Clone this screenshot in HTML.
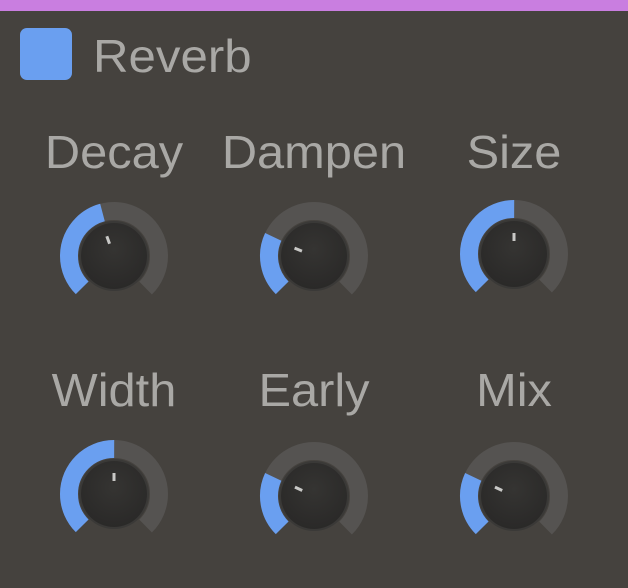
<!DOCTYPE html>
<html><head><meta charset="utf-8"><style>
html,body{margin:0;padding:0}
body{width:628px;height:588px;background:#45423e;position:relative;overflow:hidden;font-family:"Liberation Sans","DejaVu Sans",sans-serif}
.bar{position:absolute;left:0;top:0;width:628px;height:11px;background:#c97ee0}
.sq{position:absolute;left:20px;top:28px;width:52px;height:52px;border-radius:7px;background:#6a9ff0}
.t{position:absolute;color:#a9a8a5;font-size:46px;line-height:1;white-space:nowrap;transform:scaleX(1.07);transform-origin:left center}
.lab{position:absolute;width:200px;text-align:center;color:#a9a8a5;font-size:46px;line-height:1;transform:scaleX(1.06)}
svg{position:absolute;left:0;top:0}
</style></head><body>
<div class="bar"></div>
<div class="sq"></div>
<div class="t" style="left:93px;top:33px">Reverb</div>
<div class="lab" style="left:14px;top:129px">Decay</div>
<div class="lab" style="left:214px;top:129px">Dampen</div>
<div class="lab" style="left:414px;top:129px">Size</div>
<div class="lab" style="left:14px;top:367px">Width</div>
<div class="lab" style="left:214px;top:367px">Early</div>
<div class="lab" style="left:414px;top:367px">Mix</div>
<svg width="628" height="588" viewBox="0 0 628 588">
<defs>
<radialGradient id="k" cx="50%" cy="40%" r="60%"><stop offset="0" stop-color="#353432"/><stop offset="1" stop-color="#2a2928"/></radialGradient>
<g id="base">
<circle r="45" fill="none" stroke="#555351" stroke-width="18" stroke-dasharray="212.06 400" transform="rotate(135)"/>
<circle r="35" fill="#3a3937"/>
<circle r="33" fill="url(#k)"/>
</g>
</defs>
<g transform="translate(114,256)"><use href="#base"/><circle r="45" fill="none" stroke="#6a9ff0" stroke-width="18" stroke-dasharray="94.25 400" transform="rotate(135)"/><line x1="0" y1="-13" x2="0" y2="-21" stroke="#c8c8c6" stroke-width="3" transform="rotate(-20)"/></g>
<g transform="translate(314,256)"><use href="#base"/><circle r="45" fill="none" stroke="#6a9ff0" stroke-width="18" stroke-dasharray="54.98 400" transform="rotate(135)"/><line x1="0" y1="-13" x2="0" y2="-21" stroke="#c8c8c6" stroke-width="3" transform="rotate(-68)"/></g>
<g transform="translate(514,254)"><use href="#base"/><circle r="45" fill="none" stroke="#6a9ff0" stroke-width="18" stroke-dasharray="106.03 400" transform="rotate(135)"/><line x1="0" y1="-13" x2="0" y2="-21" stroke="#c8c8c6" stroke-width="3"/></g>
<g transform="translate(114,494)"><use href="#base"/><circle r="45" fill="none" stroke="#6a9ff0" stroke-width="18" stroke-dasharray="106.03 400" transform="rotate(135)"/><line x1="0" y1="-13" x2="0" y2="-21" stroke="#c8c8c6" stroke-width="3"/></g>
<g transform="translate(314,496)"><use href="#base"/><circle r="45" fill="none" stroke="#6a9ff0" stroke-width="18" stroke-dasharray="54.98 400" transform="rotate(135)"/><line x1="0" y1="-13" x2="0" y2="-21" stroke="#c8c8c6" stroke-width="3" transform="rotate(-65)"/></g>
<g transform="translate(514,496)"><use href="#base"/><circle r="45" fill="none" stroke="#6a9ff0" stroke-width="18" stroke-dasharray="54.98 400" transform="rotate(135)"/><line x1="0" y1="-13" x2="0" y2="-21" stroke="#c8c8c6" stroke-width="3" transform="rotate(-65)"/></g>
</svg>
</body></html>
